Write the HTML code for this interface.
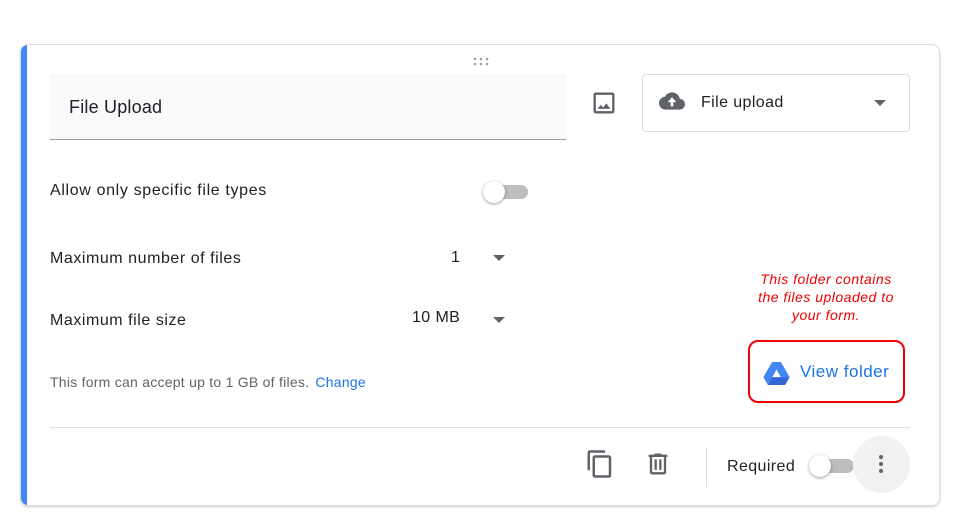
<!DOCTYPE html>
<html><head><style>
*{margin:0;padding:0;box-sizing:border-box}
body{width:960px;height:529px;background:#fff;font-family:"Liberation Sans",Arial,sans-serif;position:relative;overflow:hidden;color:#202124}
.card{position:absolute;left:20px;top:44px;width:920px;height:462px;border:1px solid #dadce0;border-radius:8px;box-shadow:0 1px 2px rgba(0,0,0,.2);overflow:hidden}
.bar{position:absolute;left:0;top:0;width:6px;height:100%;background:#4285f4}
.a{position:absolute}
.t{font-size:16px;color:#202124;letter-spacing:0.4px}
</style></head><body>
<div class="card"><div class="bar"></div></div>
<div class="a" style="left:472px;top:54px;width:18px;height:10px">
<svg width="18" height="10"><g fill="#9aa0a6"><circle cx="3" cy="2" r="1.3"/><circle cx="9" cy="2" r="1.3"/><circle cx="15" cy="2" r="1.3"/><circle cx="3" cy="7" r="1.3"/><circle cx="9" cy="7" r="1.3"/><circle cx="15" cy="7" r="1.3"/></g></svg></div>
<div class="a" style="left:50px;top:74px;width:516px;height:66px;background:#f8f9fa;border-bottom:1px solid #9aa0a6"></div>
<div class="a" style="left:69px;top:97px;font-size:18px;letter-spacing:0.2px">File Upload</div>
<svg class="a" style="left:590px;top:89px" width="28" height="28" viewBox="0 0 24 24"><path fill="#5f6368" d="M19 3H5c-1.1 0-2 .9-2 2v14c0 1.1.9 2 2 2h14c1.1 0 2-.9 2-2V5c0-1.1-.9-2-2-2zm0 16H5V5h14v14zm-5.04-6.71l-2.75 3.54-1.96-2.36L6.5 17h11l-3.54-4.71z"/></svg>
<div class="a" style="left:642px;top:74px;width:268px;height:58px;border:1px solid #dadce0;border-radius:4px"></div>
<svg class="a" style="left:656px;top:88px" width="32" height="26" viewBox="0 0 24 24"><path fill="#5f6368" d="M19.35 10.04C18.67 6.59 15.64 4 12 4 9.11 4 6.6 5.64 5.35 8.04 2.34 8.36 0 10.91 0 14c0 3.31 2.69 6 6 6h13c2.76 0 5-2.24 5-5 0-2.64-2.05-4.78-4.65-4.96z"/><path fill="#fff" d="M13.2 17v-4h2.8l-4-4.5-4 4.5h2.8v4z"/></svg>
<div class="a t" style="left:701px;top:94px">File upload</div>
<svg class="a" style="left:874px;top:99px" width="12" height="8"><path d="M0 1h12L6 7z" fill="#5f6368"/></svg>
<div class="a t" style="left:50px;top:182px;letter-spacing:0.65px">Allow only specific file types</div>
<div class="a" style="left:488px;top:185px;width:40px;height:14px;border-radius:7px;background:#bdbdbd"></div>
<div class="a" style="left:483px;top:181px;width:22px;height:22px;border-radius:50%;background:#fff;box-shadow:0 1px 3px rgba(0,0,0,.4)"></div>
<div class="a t" style="left:50px;top:250px;letter-spacing:0.55px">Maximum number of files</div>
<div class="a t" style="left:451px;top:249px">1</div>
<svg class="a" style="left:493px;top:254px" width="12" height="8"><path d="M0 1h12L6 7z" fill="#5f6368"/></svg>
<div class="a t" style="left:50px;top:312px;letter-spacing:0.55px">Maximum file size</div>
<div class="a t" style="left:412px;top:309px">10 MB</div>
<svg class="a" style="left:493px;top:316px" width="12" height="8"><path d="M0 1h12L6 7z" fill="#5f6368"/></svg>
<div class="a" style="left:50px;top:374px;font-size:14px;color:#5f6368;letter-spacing:0.25px">This form can accept up to 1 GB of files. <span style="color:#1a73e8;margin-left:2px">Change</span></div>
<div class="a" style="left:731px;top:270px;width:190px;text-align:center;font-size:14px;font-style:italic;color:#e00;line-height:18px;letter-spacing:0.5px">This folder contains<br>the files uploaded to<br>your form.</div>
<div class="a" style="left:748px;top:340px;width:157px;height:63px;border:2px solid #e00;border-radius:10px"></div>
<svg class="a" style="left:763px;top:362px" width="27" height="23" viewBox="0 0 87 76"><path fill="#4285f4" d="M29 0h29l29 50H58z"/><path fill="#4285f4" d="M29 0l14.5 25L15 76 0 50z"/><path fill="#3367d6" d="M29 50h58L72 76H15z"/></svg>
<div class="a" style="left:800px;top:362px;font-size:17px;color:#1a73e8;letter-spacing:0.5px">View folder</div>
<div class="a" style="left:50px;top:427px;width:860px;height:1px;background:#e0e0e0"></div>
<svg class="a" style="left:585px;top:449px" width="30" height="30" viewBox="0 0 24 24"><path fill="#5f6368" d="M16 1H4c-1.1 0-2 .9-2 2v14h2V3h12V1zm3 4H8c-1.1 0-2 .9-2 2v14c0 1.1.9 2 2 2h11c1.1 0 2-.9 2-2V7c0-1.1-.9-2-2-2zm0 16H8V7h11v14z"/></svg>
<svg class="a" style="left:644px;top:450px" width="28" height="28" viewBox="0 0 24 24"><path fill="#5f6368" d="M15 4V3H9v1H4v2h1v13c0 1.1.9 2 2 2h10c1.1 0 2-.9 2-2V6h1V4h-5zm2 15H7V6h10v13zM9 8h2v9H9zm4 0h2v9h-2z"/></svg>
<div class="a" style="left:706px;top:447px;width:1px;height:40px;background:#dadce0"></div>
<div class="a t" style="left:727px;top:458px">Required</div>
<div class="a" style="left:814px;top:459px;width:40px;height:14px;border-radius:7px;background:#bdbdbd"></div>
<div class="a" style="left:809px;top:455px;width:22px;height:22px;border-radius:50%;background:#fff;box-shadow:0 1px 3px rgba(0,0,0,.4)"></div>
<div class="a" style="left:853px;top:436px;width:57px;height:57px;border-radius:50%;background:#f1f1f1"></div>
<svg class="a" style="left:876px;top:454px" width="10" height="20"><g fill="#5f6368"><circle cx="5" cy="3" r="2"/><circle cx="5" cy="10" r="2"/><circle cx="5" cy="17" r="2"/></g></svg>
</body></html>
